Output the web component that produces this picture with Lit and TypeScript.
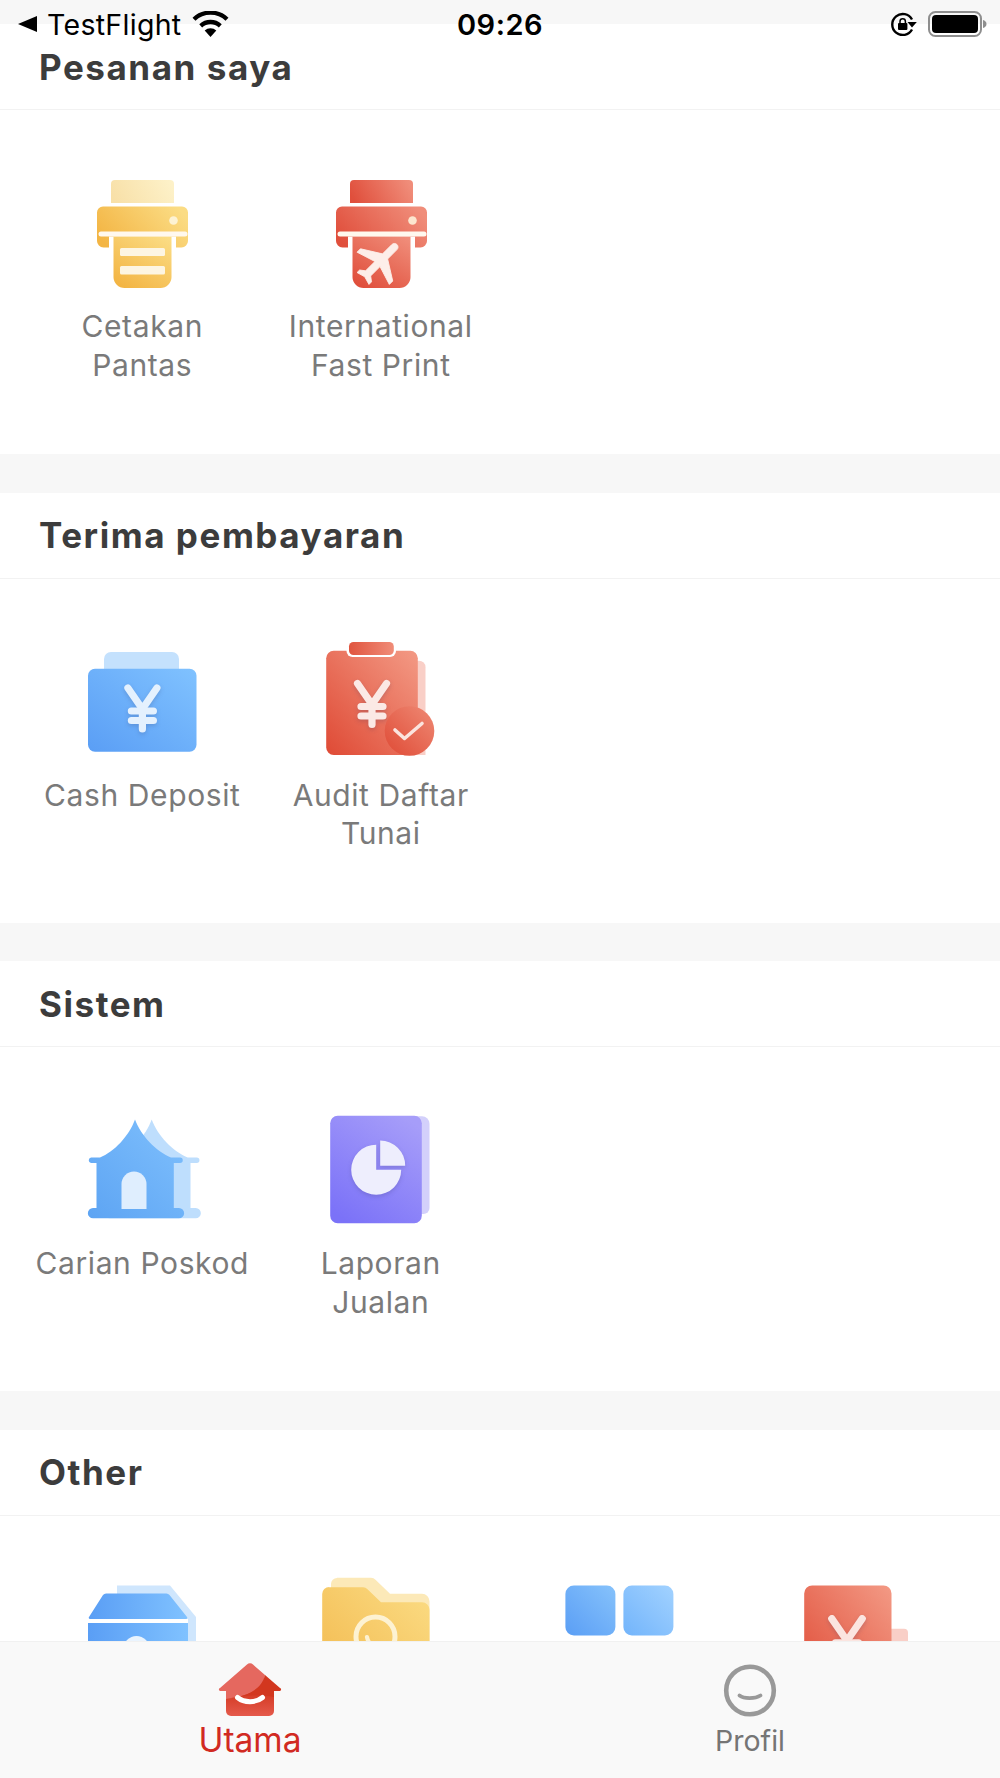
import { LitElement, html, css, svg } from "lit";
import { customElement } from "lit/decorators.js";

const grad = (id: string, a: string, b: string, x1 = 0, y1 = 1, x2 = 1, y2 = 0) => svg`
  <linearGradient id=${id} x1=${x1} y1=${y1} x2=${x2} y2=${y2}>
    <stop offset="0" stop-color=${a}></stop><stop offset="1" stop-color=${b}></stop>
  </linearGradient>`;

const yen = (cx: number, top: number, s: number, color: string, w = 7.2) => svg`
  <g class="soft" fill="none" stroke=${color} stroke-width=${w} stroke-linecap="round" stroke-linejoin="round">
    <path d="M${cx - 14.5 * s} ${top + 3 * s}L${cx} ${top + 24 * s}L${cx + 14.5 * s} ${top + 3 * s}"></path>
    <path d="M${cx} ${top + 24 * s}V${top + 44 * s}"></path>
    <path d="M${cx - 11 * s} ${top + 26 * s}H${cx + 11 * s}M${cx - 11 * s} ${top + 35.5 * s}H${cx + 11 * s}"></path>
  </g>`;

const printerBase = (id: string, a: string, b: string, topA: string, topB: string, dot: string) => svg`
  <defs>
    ${grad(id + "t", topA, topB, 0, 0.6, 1, 0.4)}
    ${grad(id + "b", a, b, 0, 0.7, 1, 0.3)}
    ${grad(id + "p", a, b, 0.2, 1, 0.9, 0)}
  </defs>
  <path d="M33 11H88a4 4 0 0 1 4 4V34H29V15a4 4 0 0 1 4-4z" fill="url(#${id}t)"></path>
  <path d="M21 37.500H100a6 6 0 0 1 6 6V72a6.500 6.500 0 0 1-6.500 6.500H94V67.500H27V78.500H21.500a6.500 6.500 0 0 1-6.500-6.500V43.500a6 6 0 0 1 6-6z" fill="url(#${id}b)"></path>
  <path d="M31.500 67.500H89.500V108a11 11 0 0 1-11 11H42.500a11 11 0 0 1-11-11z" fill="url(#${id}p)"></path>
  <path d="M19 62.500H103a2.500 2.500 0 0 1 0 5H19a2.500 2.500 0 0 1 0-5z" fill="#fff8ee"></path>
  <circle cx="91.500" cy="51.500" r="4.300" fill=${dot}></circle>`;

const housePath = "M53 13.500C59 30 74 45 89 51.500H98a2.500 2.500 0 0 1 0 5.500H91.800V102H97a5 5 0 0 1 0 10.300H11a5 5 0 0 1 0-10.300H14.500V57H9a2.800 2.800 0 0 1 0-5.500H18C32 46 47 30 53 13.500z";

const icons: Record<string, () => unknown> = {
  printerY: () => svg`
    ${printerBase("py", "#f3b544", "#fbdc84", "#f8e0a8", "#fdf1c8", "#fdf2d2")}
    <rect x="38" y="79" width="45" height="8" rx="1.500" fill="#fdf5e2"></rect>
    <rect x="38" y="97" width="45" height="8.500" rx="1.500" fill="#fdf5e2"></rect>`,
  printerR: () => svg`
    ${printerBase("pr", "#e04f3c", "#f08d7a", "#e04f3c", "#f08d7a", "#fce6cf")}
    <g transform="translate(59 92.500) rotate(45) scale(2.400) translate(-11.500 -12)">
      <path fill="#fdeee9" stroke="#fdeee9" stroke-width="0.350" stroke-linejoin="round" d="M21 16v-2l-8-5V3.500c0-.83-.67-1.500-1.500-1.500S10 2.670 10 3.500V9l-8 5v2l8-2.500V19l-2 1.500V22l3.500-1 3.500 1v-1.500L13 19v-5.500l8 2.500z"></path>
    </g>`,
  cash: () => svg`
    <defs>${grad("ca", "#5a9ef5", "#80c2ff")}</defs>
    <path d="M29 14H90a7 7 0 0 1 7 7V40H22V21a7 7 0 0 1 7-7z" fill="#c4e1fd"></path>
    <rect x="6" y="30.700" width="108.500" height="83" rx="7" fill="url(#ca)"></rect>
    ${yen(60.400, 47, 1, "#e4f1fe")}`,
  audit: () => svg`
    <defs>
      ${grad("au", "#df4a35", "#f39a85")}
      ${grad("au2", "#e0553f", "#f08c78", 0, 0.5, 1, 0.5)}
      ${grad("au3", "#df4a35", "#ef8a75")}
    </defs>
    <path d="M90 22.700H98a6.500 6.500 0 0 1 6.500 6.500V117H30V80z" fill="#f9cfc7"></path>
    <rect x="5.200" y="12.700" width="91.600" height="104.300" rx="7.500" fill="url(#au)"></rect>
    <rect x="25.500" y="2" width="49.500" height="17" rx="6" fill="#fff"></rect>
    <rect x="28" y="4" width="44.800" height="13" rx="4.500" fill="url(#au2)"></rect>
    ${yen(51, 42.500, 1, "#fbe9e5")}
    <circle cx="88.500" cy="93" r="24.800" fill="url(#au3)"></circle>
    <path d="M74 92L83.500 100.500L101 85.500" fill="none" stroke="#fbe4de" stroke-width="3.600" stroke-linecap="round" stroke-linejoin="round"></path>`,
  house: () => svg`
    <defs>${grad("ho", "#5da4f3", "#7fc0fd")}</defs>
    <path transform="translate(16.700 0)" d=${housePath} fill="#bedefd"></path>
    <path d=${housePath} fill="url(#ho)"></path>
    <path d="M39.500 103V78a12.500 12.500 0 0 1 25 0V103z" fill="#dfeefe"></path>`,
  chart: () => svg`
    <defs>${grad("ch", "#7b72f8", "#a69df9", 0.2, 1, 0.8, 0)}</defs>
    <path d="M20 10.300H101a7.500 7.500 0 0 1 7.500 7.500V102a6 6 0 0 1-6 6H20z" fill="#d3d0fb"></path>
    <rect x="9.200" y="9.700" width="91.600" height="107.600" rx="7.500" fill="url(#ch)"></rect>
    <g class="soft" fill="#eeeefd">
      <path d="M55.200 38.700A25 25 0 1 0 80.200 63.700H55.200z"></path>
      <path d="M59.200 34.500A25 25 0 0 1 84.200 59.700H59.200z"></path>
    </g>`,
  box: () => svg`
    <defs>${grad("bo", "#5a9ef5", "#80c2ff", 0, 0.5, 1, 0.5)}</defs>
    <path d="M35 10.500H88L114 42V120H106V44H35z" fill="#cfe6fd"></path>
    <path d="M24.500 18.500H84a4 4 0 0 1 3.500 1.500L105 42a1.200 1.200 0 0 1-1 2H8a1.200 1.200 0 0 1-1-2L21 20a4 4 0 0 1 3.500-1.500z" fill="url(#bo)"></path>
    <rect x="6" y="48" width="100" height="72" fill="url(#bo)"></rect>
    <circle cx="54.500" cy="74" r="13" fill="#eaf4fe"></circle>`,
  folder: () => svg`
    <defs>${grad("fo", "#f2b84c", "#fbdc84")}</defs>
    <path d="M16 2.800H50a6 6 0 0 1 4.500 2L69 18.800H101a7.500 7.500 0 0 1 7.500 7.500V70H10V9a6 6 0 0 1 6-6z" fill="#fce9b8"></path>
    <path d="M8 12.200H42a6 6 0 0 1 4.500 2L60 27.200H101a7.500 7.500 0 0 1 7.500 7.500V120H1.200V19a7 7 0 0 1 7-7z" fill="url(#fo)"></path>
    <circle cx="54.500" cy="61.500" r="19.500" fill="none" stroke="#fdf2d2" stroke-width="5"></circle>
    <path d="M46 62C47 68 52 72 58 73" fill="none" stroke="#fdf2d2" stroke-width="4.200" stroke-linecap="round"></path>`,
  squares: () => svg`
    <defs>
      ${grad("s1", "#5a9ef5", "#86c2fb")}
      ${grad("s2", "#72b4fb", "#a2d2ff")}
    </defs>
    <rect x="6.400" y="10.500" width="50" height="50" rx="8.500" fill="url(#s1)"></rect>
    <rect x="64.400" y="10.500" width="50" height="50" rx="8.500" fill="url(#s2)"></rect>`,
  bill: () => svg`
    <defs>${grad("bi", "#df4a35", "#f39a85")}</defs>
    <path d="M90 53.800H106a4 4 0 0 1 4 4V120H90z" fill="#f9cfc7"></path>
    <path d="M14 10.500H85.500a8 8 0 0 1 8 8V120H6.200V18.500a8 8 0 0 1 8-8z" fill="url(#bi)"></path>
    ${yen(49, 40.500, 1.050, "#fbe5e0")}`,
};

interface Item { icon: string; label: string; }
interface Section { title: string; items: Item[]; }

const sections: Section[] = [
  { title: "Pesanan saya", items: [
    { icon: "printerY", label: "Cetakan\nPantas" },
    { icon: "printerR", label: "International\nFast Print" },
  ] },
  { title: "Terima pembayaran", items: [
    { icon: "cash", label: "Cash Deposit" },
    { icon: "audit", label: "Audit Daftar\nTunai" },
  ] },
  { title: "Sistem", items: [
    { icon: "house", label: "Carian Poskod" },
    { icon: "chart", label: "Laporan\nJualan" },
  ] },
  { title: "Other", items: [
    { icon: "box", label: "" },
    { icon: "folder", label: "" },
    { icon: "squares", label: "" },
    { icon: "bill", label: "" },
  ] },
];

@customElement("app-root")
export class AppRoot extends LitElement {
  static styles = css`
    :host {
      display: flex;
      flex-direction: column;
      width: 1000px;
      height: 1778px;
      overflow: hidden;
      background: #f7f7f7;
      font-family: Inter, "Liberation Sans", sans-serif;
    }
    .status {
      flex: none;
      height: 24px;
      background: #f7f7f7;
      position: relative;
      z-index: 2;
    }
    .status-row {
      height: 48px;
      display: grid;
      grid-template-columns: 1fr auto 1fr;
      align-items: center;
      padding: 0 13px;
      color: #000;
    }
    .status-left { display: flex; align-items: center; padding-left: 5px; }
    .status-left .app { font-size: 28.500px; margin-left: 10px; margin-right: 11px; letter-spacing: 0.3px; }
    .status-time { font-size: 29px; font-weight: 600; letter-spacing: 0.5px; }
    .status-right { display: flex; align-items: center; justify-content: flex-end; gap: 11px; }
    .status svg { display: block; flex: none; }
    .content { flex: 1; min-height: 0; overflow: hidden; }
    .section { margin-bottom: 38.500px; background: #fff; }
    .head {
      height: 85px;
      padding-left: 39px;
      display: flex;
      align-items: center;
      font-size: 35px;
      font-weight: 700;
      letter-spacing: 1.550px;
      color: #3c3c3c;
      border-bottom: 1.500px solid #f2f2f2;
    }
    .grid {
      display: grid;
      grid-template-columns: repeat(4, 1fr);
      padding: 59px 23px 0;
      height: 344px;
      box-sizing: border-box;
    }
    .item { display: flex; flex-direction: column; align-items: center; }
    .item svg { display: block; width: 120px; height: 120px; flex: none; overflow: visible; }
    .soft { filter: drop-shadow(0 2px 2px rgba(40, 40, 90, 0.18)); }
    .label {
      margin-top: 18px;
      font-size: 30px;
      line-height: 38.500px;
      color: #7a7a7a;
      text-align: center;
      white-space: pre-line;
      letter-spacing: 0.6px;
    }
    .tabs {
      flex: none;
      height: 137px;
      box-sizing: border-box;
      background: #f9f9f9;
      border-top: 1.500px solid #f1f1f1;
      display: grid;
      grid-template-columns: 1fr 1fr;
      position: relative;
      z-index: 1;
    }
    .tab { display: flex; flex-direction: column; align-items: center; padding-top: 19px; }
    .tab svg { display: block; width: 64px; height: 58px; flex: none; }
    .tab .t1 { font-size: 33.500px; line-height: 38px; color: #d12a22; margin-top: 2px; }
    .tab .t2 { font-size: 28.500px; line-height: 38px; color: #757575; margin-top: 3px; }
  `;

  private statusBar() {
    return html`<div class="status"><div class="status-row">
      <div class="status-left">
        <svg width="19" height="16" viewBox="0 0 19 16"><path d="M19 0V16L0 8z" fill="#000"></path></svg>
        <span class="app">TestFlight</span>
        <svg width="37" height="26" viewBox="0 0 37 26">
          <path d="M18.500 26L12.700 19.500a8.600 8.600 0 0 1 11.600 0z" fill="#000"></path>
          <g fill="none" stroke="#000" stroke-width="4.300">
            <path d="M8.700 14.800a14.600 14.600 0 0 1 19.600 0"></path>
            <path d="M2 8.200a24 24 0 0 1 33 0"></path>
          </g>
        </svg>
      </div>
      <div class="status-time">09:26</div>
      <div class="status-right">
        <svg width="27" height="24" viewBox="0 0 27 24">
          <path d="M22 17.500A10.500 10.500 0 1 1 22 7.500" fill="none" stroke="#000" stroke-width="2.400"></path>
          <path d="M26.800 10L22 15.500L17.500 10z" fill="#000"></path>
          <path d="M10 11V9.500a2.700 2.700 0 0 1 5.400 0V11" fill="none" stroke="#000" stroke-width="1.500"></path>
          <rect x="8" y="11" width="9.400" height="7" rx="1" fill="#000"></rect>
        </svg>
        <svg width="59" height="26" viewBox="0 0 59 26">
          <rect x="1" y="1" width="52" height="24" rx="6.500" fill="none" stroke="#8e8e8e" stroke-width="2"></rect>
          <rect x="4" y="4" width="46" height="18" rx="4" fill="#000"></rect>
          <path d="M55 9c2 .5 3.500 2 3.500 4s-1.500 3.500-3.500 4z" fill="#8e8e8e"></path>
        </svg>
      </div>
    </div></div>`;
  }

  render() {
    return html`
      ${this.statusBar()}
      <div class="content">
        ${sections.map(s => html`
          <section class="section">
            <div class="head">${s.title}</div>
            <div class="grid">
              ${s.items.map(i => html`
                <div class="item">
                  <svg viewBox="0 0 120 120">${icons[i.icon]()}</svg>
                  ${i.label ? html`<div class="label">${i.label}</div>` : ""}
                </div>`)}
            </div>
          </section>`)}
      </div>
      <div class="tabs">
        <div class="tab">
          <svg viewBox="0 0 64 58">
            <defs>
              <linearGradient id="hb" x1="0" y1="0" x2="0" y2="1">
                <stop offset="0" stop-color="#d2371f"></stop><stop offset="1" stop-color="#e55a4c"></stop>
              </linearGradient>
            </defs>
            <path d="M8 30H56V50a5 5 0 0 1-5 5H13a5 5 0 0 1-5-5z" fill="url(#hb)"></path>
            <path d="M29 3.500a4 4 0 0 1 6 0L47 14C46 24 40 34 8 38V30H3a1.500 1.500 0 0 1-1-3z" fill="#e5685f"></path>
            <path d="M47 14L62 27a1.500 1.500 0 0 1-1 3H56V36C44 33 26 34 8 38C32 35 44 27 47 14z" fill="#d2371f"></path>
            <path d="M19.500 36.500C26 42 38 42 44.500 36.500" fill="none" stroke="#fff" stroke-width="5" stroke-linecap="round"></path>
          </svg>
          <div class="t1">Utama</div>
        </div>
        <div class="tab">
          <svg viewBox="0 0 64 58">
            <circle cx="32" cy="29.500" r="23.800" fill="none" stroke="#999" stroke-width="4.600"></circle>
            <path d="M21.500 34.500C26 38 37 38 42.500 34.500" fill="none" stroke="#999" stroke-width="3.800" stroke-linecap="round"></path>
          </svg>
          <div class="t2">Profil</div>
        </div>
      </div>
    `;
  }
}
